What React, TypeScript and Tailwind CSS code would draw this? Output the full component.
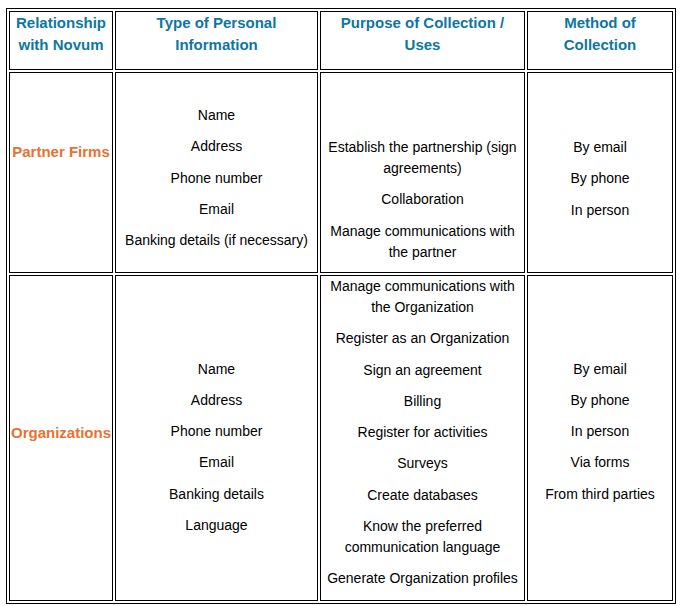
import React from 'react';

type Para = string[];

interface CellProps {
  pt: string;
  paras: Para[];
}

const headers: Para[] = [
  ['Relationship', 'with Novum'],
  ['Type of Personal', 'Information'],
  ['Purpose of Collection /', 'Uses'],
  ['Method of', 'Collection'],
];

// Body cell: paragraphs stacked from the top, each line forced as in the document
const BodyCell: React.FC<CellProps> = ({ pt, paras }) => (
  <div className={`border border-black flex flex-col items-center gap-y-[10.3px] text-[14px] leading-[21px] text-black ${pt}`}>
    {paras.map((p, i) => (
      <p key={i} className="text-center whitespace-nowrap">
        {p.map((line, j) => (
          <React.Fragment key={j}>
            {j > 0 && <br />}
            {line}
          </React.Fragment>
        ))}
      </p>
    ))}
  </div>
);

const LabelCell: React.FC<{ pt: string; label: string }> = ({ pt, label }) => (
  <div className={`border border-black flex justify-center text-[15px] leading-[21px] font-bold text-[#E97132] whitespace-nowrap ${pt}`}>
    {label}
  </div>
);

export default function App() {
  return (
    <div className="bg-white w-[681px] h-[606px] pt-[8px] pl-[6px] font-['Liberation_Sans',Arial,sans-serif]">
      <div className="inline-block border border-black p-[2px]">
        <div className="grid grid-cols-[104px_203px_205px_146px] grid-rows-[59px_201px_326px] gap-[2px]">
          {headers.map((h, i) => (
            <div
              key={i}
              className="border border-black flex flex-col items-center pt-0 text-[15px] leading-[22px] font-bold text-[#0E76A1] text-center whitespace-nowrap"
            >
              {h.map((line) => (
                <span key={line}>{line}</span>
              ))}
            </div>
          ))}

          <LabelCell pt="pt-[67.5px]" label="Partner Firms" />
          <BodyCell
            pt="pt-[32px]"
            paras={[['Name'], ['Address'], ['Phone number'], ['Email'], ['Banking details (if necessary)']]}
          />
          <BodyCell
            pt="pt-[64px]"
            paras={[
              ['Establish the partnership (sign', 'agreements)'],
              ['Collaboration'],
              ['Manage communications with', 'the partner'],
            ]}
          />
          <BodyCell pt="pt-[64px]" paras={[['By email'], ['By phone'], ['In person']]} />

          <LabelCell pt="pt-[145.5px]" label="Organizations" />
          <BodyCell
            pt="pt-[82.5px]"
            paras={[['Name'], ['Address'], ['Phone number'], ['Email'], ['Banking details'], ['Language']]}
          />
          <BodyCell
            pt="pt-0"
            paras={[
              ['Manage communications with', 'the Organization'],
              ['Register as an Organization'],
              ['Sign an agreement'],
              ['Billing'],
              ['Register for activities'],
              ['Surveys'],
              ['Create databases'],
              ['Know the preferred', 'communication language'],
              ['Generate Organization profiles'],
            ]}
          />
          <BodyCell
            pt="pt-[82.5px]"
            paras={[['By email'], ['By phone'], ['In person'], ['Via forms'], ['From third parties']]}
          />
        </div>
      </div>
    </div>
  );
}
